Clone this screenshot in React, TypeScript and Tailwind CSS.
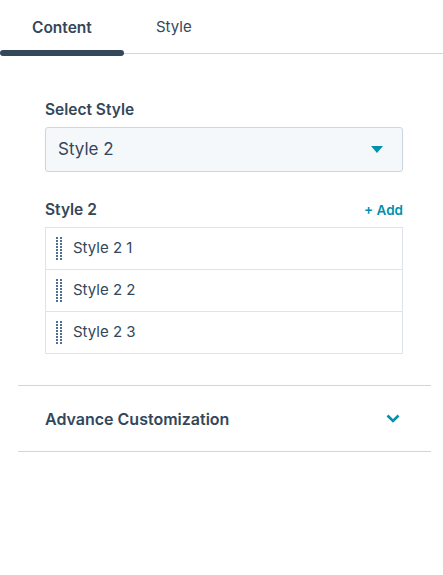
import React from "react";

function DragHandle() {
  const dots = [];
  for (let r = 0; r < 8; r++) {
    for (let c = 0; c < 2; c++) {
      dots.push(<rect key={`${r}-${c}`} x={c * 4} y={r * 3} width="2" height="2" fill="#516f90" />);
    }
  }
  return (
    <svg width="6" height="23" viewBox="0 0 6 23" className="shrink-0">
      {dots}
    </svg>
  );
}

export default function App() {
  const items = ["Style 2 1", "Style 2 2", "Style 2 3"];
  return (
    <div className="w-[443px] h-[575px] bg-white text-[#33475b]" style={{ fontFamily: "Inter, 'Open Sans', sans-serif" }}>
      <div className="relative h-[56px] flex">
        <div className="absolute left-[124px] right-0 top-[53px] h-px bg-[#cbd6e2]" />
        <div className="absolute left-0 w-[124px] top-[50px] h-[6px] rounded-full bg-[#33475b]" />
        <div className="w-[124px] h-[55px] flex items-center pl-[32px] text-[15.5px] font-semibold">Content</div>
        <div className="h-[55px] flex items-center pl-[32px] text-[15px]">Style</div>
      </div>

      <div className="pl-[18px] pr-[12px] pt-[45px]">
        <div className="pl-[27px] pr-[28px]">
          <div className="text-[15.5px] font-semibold leading-[18px]">Select Style</div>
          <div className="mt-[8px] h-[45px] rounded-[3px] border border-[#cbd6e2] bg-[#f5f8fa] flex items-center justify-between pl-[12px] pr-[19px]">
            <span className="text-[17px]">Style 2</span>
            <svg width="12" height="7" viewBox="0 0 12 7">
              <path d="M0 0 H12 L6 7 Z" fill="#0091ae" />
            </svg>
          </div>

          <div className="mt-[29px] flex items-center justify-between h-[18px]">
            <span className="text-[15.5px] font-semibold">Style 2</span>
            <span className="text-[13.5px] font-semibold text-[#0091ae]">+ Add</span>
          </div>
          <div className="mt-[8px] border border-[#dfe3eb]">
            {items.map((it, i) => (
              <div key={it} className={`flex items-center pl-[10px] gap-[11px] ${i > 0 ? "h-[42px] border-t border-[#dfe3eb]" : "h-[41px]"}`}>
                <DragHandle />
                <span className="text-[15px]">{it}</span>
              </div>
            ))}
          </div>
        </div>

        <div className="mt-[31px] border-t border-b border-[#cbd6e2] h-[67px] flex items-center justify-between pl-[27px] pr-[31px]">
          <span className="text-[16px] font-semibold">Advance Customization</span>
          <svg width="14" height="9" viewBox="0 0 14 9">
            <path d="M1.5 1.5 L7 7 L12.5 1.5" stroke="#0091ae" strokeWidth="2.6" fill="none" />
          </svg>
        </div>
      </div>
    </div>
  );
}
